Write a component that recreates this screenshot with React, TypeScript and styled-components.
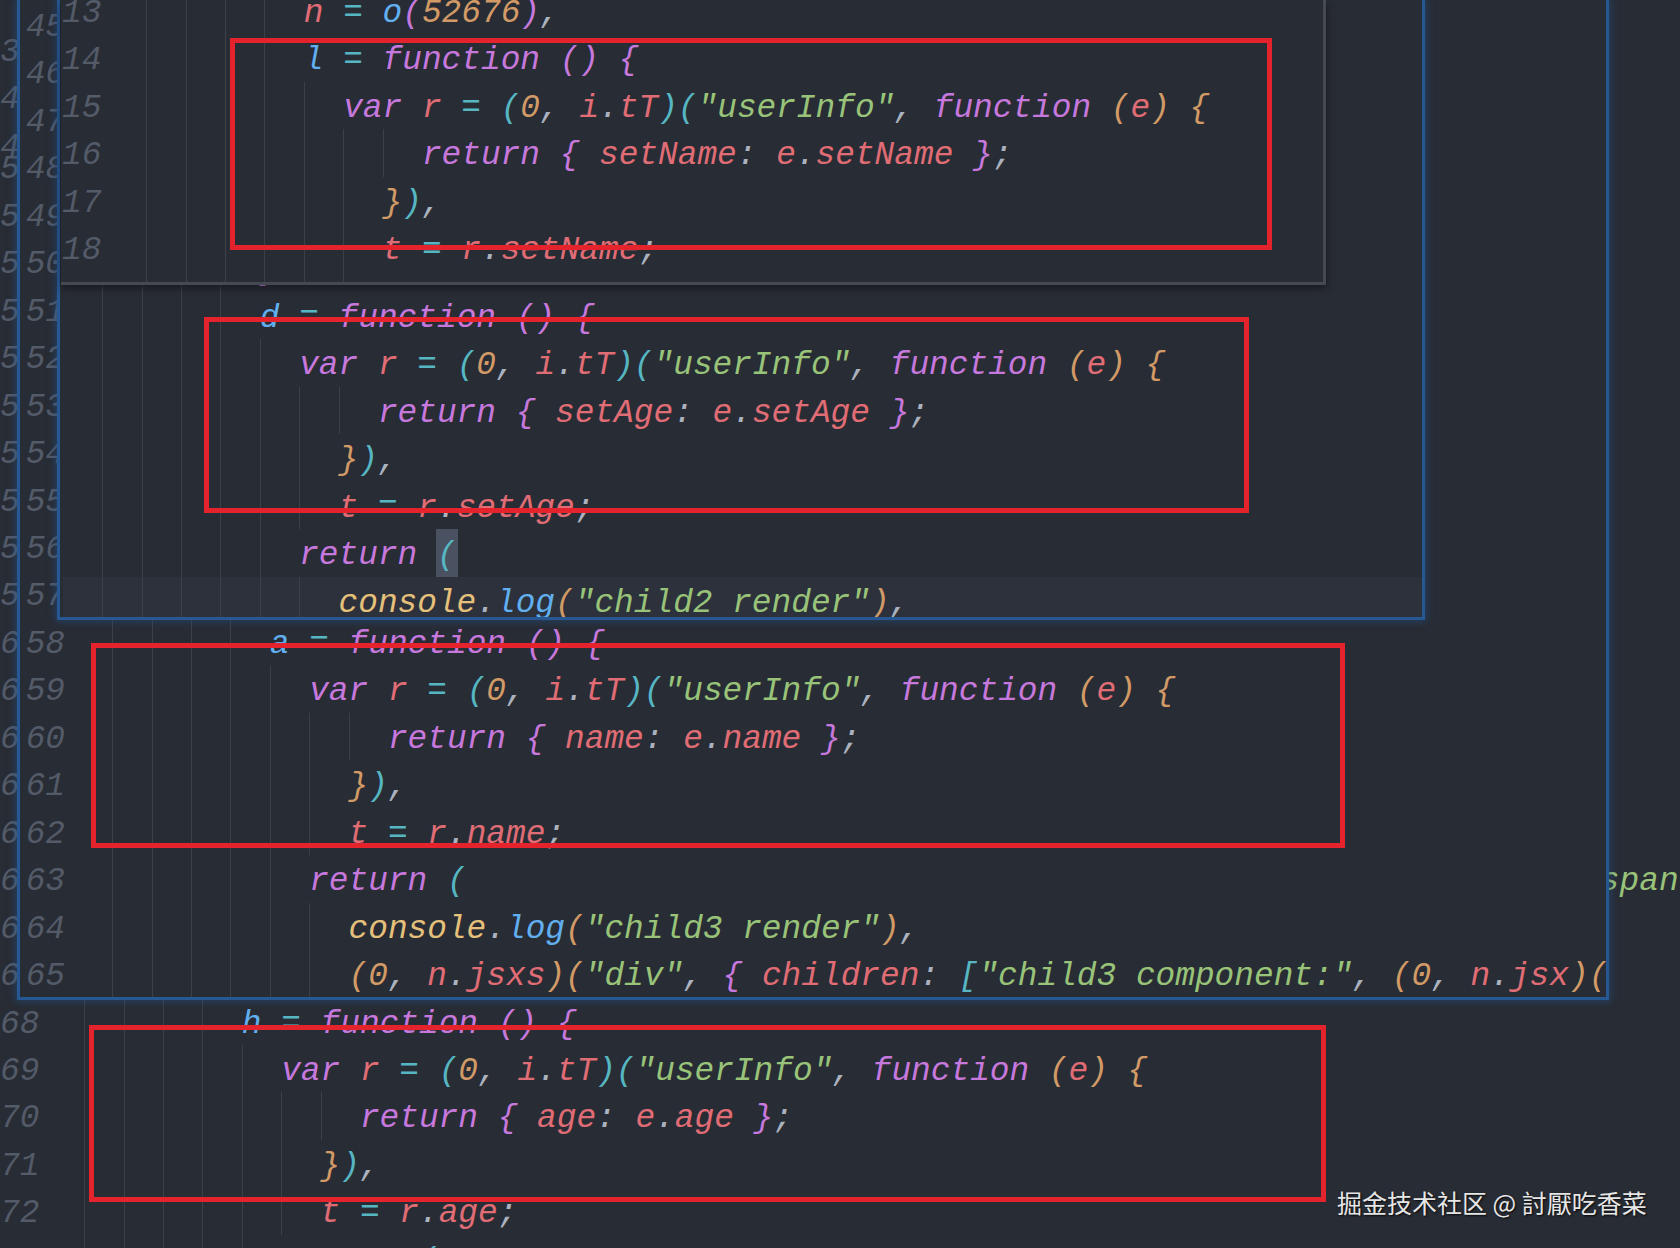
import React from 'react';
import styled, { createGlobalStyle } from 'styled-components';

const CH = 19.68;
const LH = 47.46;
const FONT = `"Liberation Mono", "DejaVu Sans Mono", monospace`;

const K = '#c678dd';
const R = '#e06c75';
const B = '#61afef';
const Cy = '#56b6c2';
const O = '#d19a66';
const G = '#98c379';
const P = '#abb2bf';
const Y = '#e5c07b';

type Tok = [string, string?, boolean?];
interface Line {
  n?: string;
  indent?: number;
  toks?: Tok[];
  active?: boolean;
  shift?: boolean;
}

const S: Tok = [' '];
const fnDecl = (name: string): Tok[] => [[name, B], S, ['=', Cy], S, ['function', K], S, ['()', K], S, ['{', K]];
const useLine: Tok[] = [
  ['var', K], S, ['r', R], S, ['=', Cy], S, ['(', Cy], ['0', O], [',', P], S, ['i', R], ['.', P], ['tT', R],
  [')', Cy], ['(', Cy], ['"userInfo"', G], [',', P], S, ['function', K], S, ['(', O], ['e', R], [')', O], S, ['{', O],
];
const retObj = (k: string): Tok[] => [['return', K], S, ['{', K], S, [k, R], [':', P], S, ['e', R], ['.', P], [k, R], S, ['}', K], [';', P]];
const closeCall: Tok[] = [['}', O], [')', Cy], [',', P]];
const assign = (k: string): Tok[] => [['t', R], S, ['=', Cy], S, ['r', R], ['.', P], [k, R], [';', P]];
const retParen = (box?: boolean): Tok[] => [['return', K], S, ['(', Cy, box]];
const logLine = (s: string): Tok[] => [['console', Y], ['.', P], ['log', B], ['(', O], [`"${s}"`, G], [')', O], [',', P]];
const jsxs: Tok[] = [
  ['(', O], ['0', O], [',', P], S, ['n', R], ['.', P], ['jsxs', R], [')', O], ['(', O], ['"div"', G], [',', P], S,
  ['{', K], S, ['children', R], [':', P], S, ['[', Cy], ['"child3 component:"', G], [',', P], S,
  ['(', O], ['0', O], [',', P], S, ['n', R], ['.', P], ['jsx', R], [')', O], ['(', O],
];

const topLines: Line[] = [
  { n: '13', indent: 10, toks: [['n', R], S, ['=', Cy], S, ['o', B], ['(', K], ['52676', O], [')', K], [',', P]] },
  { n: '14', indent: 10, toks: fnDecl('l') },
  { n: '15', indent: 12, toks: useLine },
  { n: '16', indent: 16, toks: retObj('setName') },
  { n: '17', indent: 14, toks: closeCall },
  { n: '18', indent: 14, toks: assign('setName') },
  { indent: 14 },
];

const midLines: Line[] = [
  { indent: 14 }, { indent: 16 }, { indent: 14 }, { indent: 14 }, { indent: 12 },
  { indent: 10, toks: [['}', K], [',', P]] },
  { indent: 10, toks: fnDecl('d') },
  { indent: 12, toks: useLine },
  { indent: 16, toks: retObj('setAge') },
  { indent: 14, toks: closeCall },
  { indent: 14, toks: assign('setAge') },
  { indent: 12, toks: retParen(true) },
  { indent: 14, toks: logLine('child2 render'), active: true },
];

const outerLines: Line[] = [
  ...Array.from({ length: 13 }, (_, i) => ({ n: String(45 + i) })),
  { n: '58', indent: 10, toks: fnDecl('a') },
  { n: '59', indent: 12, toks: useLine },
  { n: '60', indent: 16, toks: retObj('name') },
  { n: '61', indent: 14, toks: closeCall },
  { n: '62', indent: 14, toks: assign('name') },
  { n: '63', indent: 12, toks: retParen() },
  { n: '64', indent: 14, toks: logLine('child3 render') },
  { n: '65', indent: 14, toks: jsxs },
];

const baseLines: Line[] = [
  { n: '3', shift: true },
  { n: '4', shift: true },
  { n: '4', shift: true },
  ...Array.from({ length: 10 }, () => ({ n: '5' })),
  ...Array.from({ length: 8 }, (_, i) =>
    i === 5
      ? { n: '6', toks: [[' '.repeat(78)], ['"span", {', G]] as Tok[] }
      : { n: '6' }
  ),
  { n: '68', indent: 10, toks: fnDecl('h') },
  { n: '69', indent: 12, toks: useLine },
  { n: '70', indent: 16, toks: retObj('age') },
  { n: '71', indent: 14, toks: closeCall },
  { n: '72', indent: 14, toks: assign('age') },
  { n: '73', indent: 12, toks: retParen() },
];

const GlobalStyle = createGlobalStyle`
  html, body { margin: 0; padding: 0; background: #282c34; }
  body { width: 1680px; height: 1248px; overflow: hidden; }
`;

const Canvas = styled.div`
  position: relative;
  width: 1680px;
  height: 1248px;
  overflow: hidden;
  background: #282c34;
  font-family: ${FONT};
  font-style: italic;
  font-size: 32.8px;
`;

const Stack = styled.div<{ $offset: number }>`
  display: flex;
  flex-direction: column;
  margin-top: ${(p) => p.$offset}px;
`;

const Row = styled.div<{ $active?: boolean }>`
  display: flex;
  align-items: stretch;
  height: ${LH}px;
  line-height: ${LH + 6}px;
  white-space: pre;
  background: ${(p) => (p.$active ? '#2c313b' : 'transparent')};
`;

const Gutter = styled.span<{ $width: number; $align: 'left' | 'right'; $pad: number; $shift?: boolean }>`
  flex-shrink: 0;
  width: ${(p) => p.$width}px;
  box-sizing: border-box;
  text-align: ${(p) => p.$align};
  padding-${(p) => (p.$align === 'left' ? 'left' : 'right')}: ${(p) => p.$pad}px;
  color: #535a68;
  transform: translateY(${(p) => (p.$shift ? 25 : 0)}px);
`;

const Indent = styled.span`
  display: flex;
  flex-shrink: 0;
`;

const GuideCell = styled.span<{ $line: boolean }>`
  width: ${CH * 2}px;
  box-sizing: border-box;
  border-left: 1px solid ${(p) => (p.$line ? '#3b4049' : 'transparent')};
`;

const CodeText = styled.span`
  white-space: pre;
`;

const Token = styled.span<{ $c: string; $box?: boolean }>`
  color: ${(p) => p.$c};
  ${(p) =>
    p.$box
      ? `display: inline-block; height: ${LH}px; background: #4a5160; padding: 0 1px; margin: 0 -1px;`
      : ''}
`;

const BaseEditor = styled.div`
  padding-top: 1px;
`;

const Window = styled.div<{ $left: number; $top: number; $width: number; $height: number; $kind: 'blue' | 'gray' }>`
  position: absolute;
  left: ${(p) => p.$left}px;
  top: ${(p) => p.$top}px;
  width: ${(p) => p.$width}px;
  height: ${(p) => p.$height}px;
  box-sizing: border-box;
  overflow: hidden;
  background: #282c34;
  ${(p) =>
    p.$kind === 'blue'
      ? `border: 3px solid #265893; border-top: none; box-shadow: 0 0 7px 2px rgba(34, 84, 140, 0.5);`
      : `border-right: 3px solid #444952; border-bottom: 3px solid #444952; box-shadow: 0 3px 8px rgba(0,0,0,0.45);`}
`;

const Inner = styled.div<{ $padLeft: number }>`
  padding-left: ${(p) => p.$padLeft}px;
`;

const RedBox = styled.div<{ $left: number; $top: number; $width: number; $height: number }>`
  position: absolute;
  left: ${(p) => p.$left}px;
  top: ${(p) => p.$top}px;
  width: ${(p) => p.$width}px;
  height: ${(p) => p.$height}px;
  box-sizing: border-box;
  border: 5px solid #e4232c;
  pointer-events: none;
`;

const Watermark = styled.div`
  position: absolute;
  left: 1337px;
  top: 1185px;
  font-family: "Noto Sans CJK SC", "Noto Sans", sans-serif;
  font-style: normal;
  font-size: 25px;
  line-height: 34px;
  color: #e6e6e6;
  text-shadow: 1px 1px 2px rgba(0, 0, 0, 0.85);
  white-space: nowrap;
`;

interface GutterCfg {
  width: number;
  align: 'left' | 'right';
  pad: number;
}

const Guides: React.FC<{ indent: number }> = ({ indent }) => {
  const cells = Math.floor(indent / 2);
  return (
    <Indent>
      {Array.from({ length: cells }, (_, i) => (
        <GuideCell key={i} $line={i > 0} />
      ))}
    </Indent>
  );
};

const CodeLine: React.FC<{ line: Line; gutter?: GutterCfg }> = ({ line, gutter }) => (
  <Row $active={line.active}>
    {gutter && (
      <Gutter $width={gutter.width} $align={gutter.align} $pad={gutter.pad} $shift={line.shift}>
        {line.n ?? ''}
      </Gutter>
    )}
    <Guides indent={line.indent ?? 0} />
    <CodeText>
      {(line.toks ?? []).map(([text, color, box], i) => (
        <Token key={i} $c={color ?? P} $box={box}>
          {text}
        </Token>
      ))}
    </CodeText>
  </Row>
);

export default function App() {
  return (
    <>
      <GlobalStyle />
      <Canvas>
        <BaseEditor>
          {baseLines.map((l, i) => (
            <CodeLine key={i} line={l} gutter={{ width: 45, align: 'left', pad: 0 }} />
          ))}
        </BaseEditor>

        <Window $left={17} $top={0} $width={1592} $height={1000} $kind="blue">
          <Stack $offset={1}>
            {outerLines.map((l, i) => (
              <CodeLine key={i} line={l} gutter={{ width: 53, align: 'right', pad: 8 }} />
            ))}
          </Stack>
        </Window>

        <Window $left={57} $top={0} $width={1368} $height={620} $kind="blue">
          <Inner $padLeft={3}>
            <Stack $offset={7.2}>
              {midLines.map((l, i) => (
                <CodeLine key={i} line={l} />
              ))}
            </Stack>
          </Inner>
        </Window>

        <Window $left={61} $top={0} $width={1265} $height={285} $kind="gray">
          <Stack $offset={-13}>
            {topLines.map((l, i) => (
              <CodeLine key={i} line={l} gutter={{ width: 46, align: 'left', pad: 1 }} />
            ))}
          </Stack>
        </Window>

        <RedBox $left={230} $top={38} $width={1042} $height={212} />
        <RedBox $left={204} $top={317} $width={1045} $height={196} />
        <RedBox $left={91} $top={643} $width={1254} $height={205} />
        <RedBox $left={89} $top={1025} $width={1237} $height={177} />

        <Watermark>掘金技术社区 @ 討厭吃香菜</Watermark>
      </Canvas>
    </>
  );
}
